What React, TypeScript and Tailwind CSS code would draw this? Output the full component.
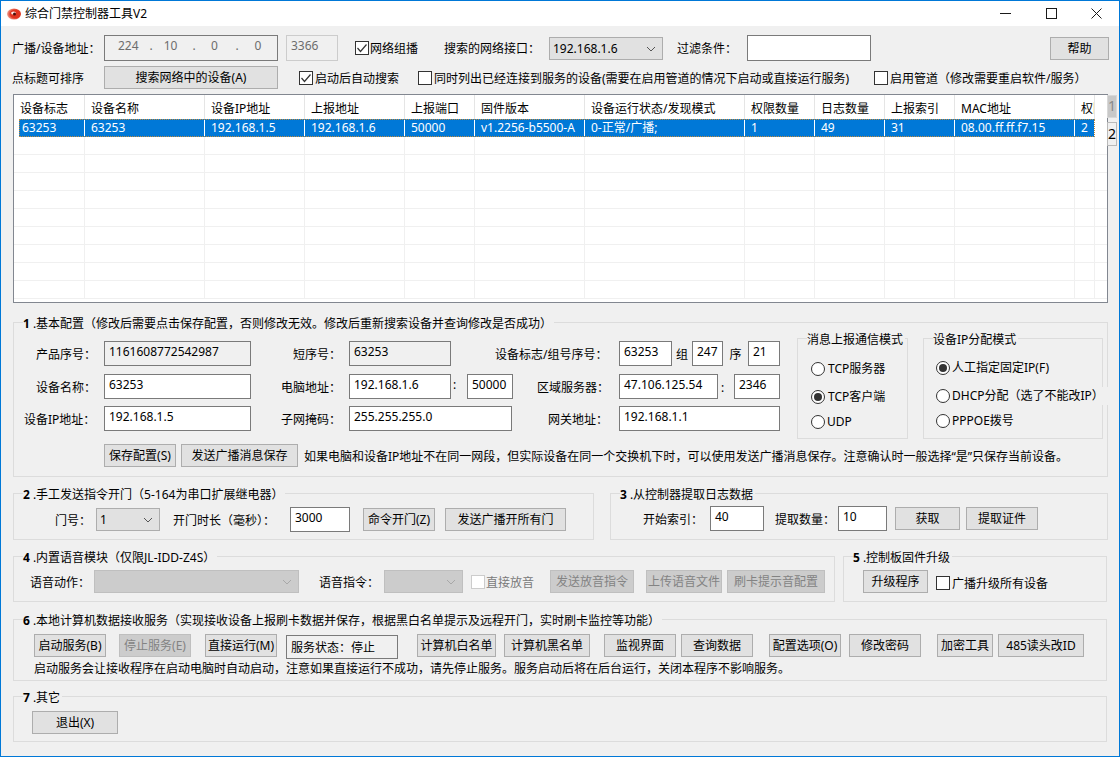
import React from "react";

type P = { className?: string; children?: React.ReactNode };

// full-width punctuation used by the dialog's labels
const CO = "\uFF1A";
const LP = "\uFF08";
const RP = "\uFF09";
const CM = "\uFF0C";

const rowCols = "grid grid-cols-[66px_120px_100px_100px_70px_110px_160px_70px_70px_70px_120px_20px] w-[1076px]";

const headers = ["设备标志", "设备名称", "设备IP地址", "上报地址", "上报端口", "固件版本", "设备运行状态/发现模式", "权限数量", "日志数量", "上报索引", "MAC地址", "权限"];
const device = ["63253", "63253", "192.168.1.5", "192.168.1.6", "50000", "v1.2256-b5500-A", "0-正常/广播;", "1", "49", "31", "08.00.ff.ff.f7.15", "2"];

function Btn({ className = "", children, disabled }: P & { disabled?: boolean }) {
  return (
    <div className={`h-[23px] shrink-0 flex items-center justify-center pt-[1px] whitespace-nowrap border ${disabled ? "bg-[#cccccc] border-[#bfbfbf] text-[#838383]" : "bg-[#e1e1e1] border-[#adadad]"} ${className}`}>
      {children}
    </div>
  );
}

function Label({ className = "", children }: P) {
  return <div className={`shrink-0 whitespace-nowrap pt-[2px] ${className}`}>{children}</div>;
}

function Input({ className = "", children }: P) {
  return <div className={`h-[25px] shrink-0 border border-[#7a7a7a] bg-white pl-[4px] leading-[20px] whitespace-nowrap ${className}`}>{children}</div>;
}

function Chevron({ color = "#555555" }: { color?: string }) {
  return (
    <svg width="10" height="6" viewBox="0 0 10 6" className="absolute right-[6px] top-[8px]">
      <path d="M1 1 L5 5 L9 1" fill="none" stroke={color} strokeWidth="1" />
    </svg>
  );
}

function Select({ className = "", children, disabled }: P & { disabled?: boolean }) {
  return (
    <div className={`relative h-[23px] shrink-0 border pl-[3px] leading-[21px] ${disabled ? "bg-[#cccccc] border-[#bfbfbf]" : "bg-[#e1e1e1] border-[#adadad]"} ${className}`}>
      {children}
      <Chevron color={disabled ? "#a8a8a8" : "#555555"} />
    </div>
  );
}

function Check({ className = "", checked, disabled }: { className?: string; checked?: boolean; disabled?: boolean }) {
  return (
    <div className={`w-[14px] h-[14px] shrink-0 border bg-white flex items-center justify-center ${disabled ? "border-[#cccccc]" : "border-[#333333]"} ${className}`}>
      {checked && (
        <svg width="12" height="12" viewBox="0 0 12 12">
          <path d="M1.5 6 L4.5 9.5 L10.5 2.5" fill="none" stroke="#333333" strokeWidth="1.2" />
        </svg>
      )}
    </div>
  );
}

function Radio({ checked }: { checked?: boolean }) {
  return (
    <div className="w-[14px] h-[14px] shrink-0 rounded-full border border-[#333333] bg-white flex items-center justify-center">
      {checked && <div className="w-[8px] h-[8px] rounded-full bg-[#333333]" />}
    </div>
  );
}

function Group({ className = "", num, title, children }: P & { num?: string; title: string }) {
  return (
    <div className={`relative shrink-0 border border-[#dcdcdc] ${className}`}>
      <div className="absolute left-[9px] top-[-8px] bg-[#f0f0f0] pr-[2px] h-[17px] leading-[17px] whitespace-nowrap">
        {num && <span className="font-bold mr-[3px]">{num}</span>}
        {num && <span>.</span>}
        {title}
      </div>
      {children}
    </div>
  );
}

export default function App() {
  return (
    <div className="w-[1120px] h-[757px] overflow-hidden border border-[#0078d7] bg-[#f0f0f0] text-[12px] text-black [font-family:'Noto_Sans','Noto_Sans_CJK_SC',sans-serif]">
      {/* title bar */}
      <div className="h-[25px] bg-white flex items-center relative">
        <svg width="14" height="12" viewBox="0 0 14 12" className="ml-[6px] shrink-0">
          <defs>
            <radialGradient id="appIcon" cx="0.6" cy="0.5" r="0.6">
              <stop offset="0.6" stopColor="#e0341f" />
              <stop offset="1" stopColor="#efa898" />
            </radialGradient>
          </defs>
          <ellipse cx="7" cy="6" rx="7" ry="5.5" fill="url(#appIcon)" />
          <ellipse cx="6.5" cy="5" rx="2.4" ry="1.6" fill="#fbe7e2" />
          <circle cx="7.5" cy="6" r="1.5" fill="#4a0d08" />
        </svg>
        <span className="ml-[4px] whitespace-nowrap">综合门禁控制器工具V2</span>
        <svg width="11" height="1" viewBox="0 0 11 1" className="ml-auto shrink-0">
          <rect width="11" height="1" fill="#1a1a1a" />
        </svg>
        <svg width="11" height="11" viewBox="0 0 11 11" className="ml-[35px] shrink-0">
          <rect x="0.5" y="0.5" width="10" height="10" fill="none" stroke="#1a1a1a" />
        </svg>
        <svg width="11" height="11" viewBox="0 0 11 11" className="ml-[34px] mr-[17px] shrink-0">
          <path d="M0.5 0.5 L10.5 10.5 M10.5 0.5 L0.5 10.5" stroke="#1a1a1a" fill="none" />
        </svg>
      </div>

      {/* address row */}
      <div className="mt-[9px] h-[26px] pl-[11px] flex items-center">
        <Label className="w-[92px]">广播/设备地址{CO}</Label>
        <div className="w-[174px] h-[26px] shrink-0 border border-[#7a7a7a] bg-[#f0f0f0] text-[#6d6d6d] flex items-start pl-[13px] pt-[1px] leading-[18px]">
          <span className="w-[23px]">224</span>
          <span className="w-[20px] text-center">.</span>
          <span className="w-[19px] text-center">10</span>
          <span className="w-[28px] text-center">.</span>
          <span className="w-[13px] text-center">0</span>
          <span className="w-[32px] text-center">.</span>
          <span className="w-[10px] text-center">0</span>
        </div>
        <div className="ml-[8px] w-[52px] h-[26px] shrink-0 border border-[#cccccc] text-[#6d6d6d] pl-[4px] pt-[1px] leading-[18px]">3366</div>
        <Check className="ml-[17px]" checked />
        <Label className="ml-[1px] w-[48px]">网络组播</Label>
        <Label className="ml-[26px] w-[105px]">搜索的网络接口{CO}</Label>
        <Select className="w-[114px]">192.168.1.6</Select>
        <Label className="ml-[14px] w-[70px]">过滤条件{CO}</Label>
        <div className="w-[124px] h-[26px] shrink-0 border border-[#7a7a7a] bg-white" />
        <Btn className="ml-[179px] w-[59px]">帮助</Btn>
      </div>

      {/* search row */}
      <div className="mt-[5px] h-[23px] pl-[11px] flex items-center">
        <Label className="w-[92px]">点标题可排序</Label>
        <Btn className="w-[174px]">搜索网络中的设备(A)</Btn>
        <Check className="ml-[21px]" checked />
        <Label className="ml-[2px] w-[103px]">启动后自动搜索</Label>
        <Check />
        <Label className="ml-[2px] w-[440px]">同时列出已经连接到服务的设备(需要在启用管道的情况下启动或直接运行服务)</Label>
        <Check />
        <Label className="ml-[2px]">启用管道{LP}修改需要重启软件/服务{RP}</Label>
      </div>

      {/* device list */}
      <div className="mt-[5px] pl-[12px] flex items-start">
        <div className="w-[1095px] h-[209px] shrink-0 border border-[#828790] bg-white overflow-hidden">
          <div className={`${rowCols} ml-[5px] h-[24px]`}>
            {headers.map((h, i) => (
              <div key={i} className={`border-r border-[#e5e5e5] overflow-hidden whitespace-nowrap leading-[27px] ${i === 0 ? "pl-[1px]" : "pl-[6px]"}`}>{h}</div>
            ))}
          </div>
          <div className="ml-[5px] w-[1076px] h-[18px] bg-[#0078d7] outline-1 outline-dotted outline-[#c08a3e] -outline-offset-1">
            <div className={rowCols}>
              {device.map((d, i) => (
                <div key={i} className={`h-[18px] border-r border-white text-white overflow-hidden whitespace-nowrap leading-[17px] ${i === 0 ? "pl-[3px]" : "pl-[6px]"}`}>{d}</div>
              ))}
            </div>
          </div>
          {[0, 1, 2, 3, 4, 5, 6, 7, 8].map((r) => (
            <div key={r} className="h-[18px] border-b border-[#f0f0f0]">
              <div className={`${rowCols} ml-[5px]`}>
                {headers.map((_, i) => (
                  <div key={i} className="h-[17px] border-r border-[#f0f0f0]" />
                ))}
              </div>
            </div>
          ))}
        </div>
        <div className="w-[10px] -ml-[1px] shrink-0 pt-[1px] text-[14px]">
          <div className="h-[23px] bg-[#c8c8c8] border border-[#d8d8d8] text-[#8a8a8a] leading-[20px] text-center overflow-hidden">1</div>
          <div className="mt-[4px] h-[24px] bg-[#f0f0f0] border border-[#b9b9b9] leading-[22px] text-center overflow-hidden">2</div>
        </div>
      </div>

      {/* 1 basic config */}
      <div className="mt-[19px] pl-[12px]">
        <Group className="w-[1095px] h-[155px]" num="1" title={`基本配置${LP}修改后需要点击保存配置${CM}否则修改无效。修改后重新搜索设备并查询修改是否成功${RP}`}>
          <div className="flex h-[116px]">
            <div className="w-[766px] shrink-0 pt-[18px]">
              <div className="h-[25px] flex items-center">
                <Label className="ml-[22px] w-[68px]">产品序号{CO}</Label>
                <Input className="w-[147px] bg-[#f0f0f0]!">1161608772542987</Input>
                <Label className="ml-[42px] w-[56px]">短序号{CO}</Label>
                <Input className="w-[102px] bg-[#f0f0f0]!">63253</Input>
                <Label className="ml-[44px] w-[124px]">设备标志/组号序号{CO}</Label>
                <Input className="w-[53px]">63253</Input>
                <Label className="w-[20px] text-center">组</Label>
                <Input className="w-[31px]">247</Input>
                <Label className="w-[25px] text-center">序</Label>
                <Input className="w-[32px]">21</Input>
              </div>
              <div className="mt-[8px] h-[25px] flex items-center">
                <Label className="ml-[22px] w-[68px]">设备名称{CO}</Label>
                <Input className="w-[147px]">63253</Input>
                <Label className="ml-[30px] w-[68px]">电脑地址{CO}</Label>
                <Input className="w-[102px]">192.168.1.6</Input>
                <Label className="w-[16px] pl-[2px] mb-[6px]">:</Label>
                <Input className="w-[46px]">50000</Input>
                <Label className="ml-[24px] w-[82px]">区域服务器{CO}</Label>
                <Input className="w-[99px]">47.106.125.54</Input>
                <Label className="w-[16px] pl-[3px]">:</Label>
                <Input className="w-[46px]">2346</Input>
              </div>
              <div className="mt-[7px] h-[25px] flex items-center">
                <Label className="ml-[10px] w-[80px]">设备IP地址{CO}</Label>
                <Input className="w-[147px]">192.168.1.5</Input>
                <Label className="ml-[30px] w-[68px]">子网掩码{CO}</Label>
                <Input className="w-[163px]">255.255.255.0</Input>
                <Label className="ml-[36px] w-[71px]">网关地址{CO}</Label>
                <Input className="w-[161px]">192.168.1.1</Input>
              </div>
            </div>
            <Group className="ml-[17px] mt-[15px] w-[111px] h-[101px]" title="消息上报通信模式">
              <div className="pl-[13px] pt-[22px]">
                <div className="h-[16px] flex items-center gap-[3px] whitespace-nowrap"><Radio />TCP服务器</div>
                <div className="mt-[12px] h-[16px] flex items-center gap-[3px] whitespace-nowrap"><Radio checked />TCP客户端</div>
                <div className="mt-[9px] h-[16px] flex items-center gap-[2px] whitespace-nowrap"><Radio />UDP</div>
              </div>
            </Group>
            <Group className="ml-[15px] mt-[15px] w-[180px] h-[101px]" title="设备IP分配模式">
              <div className="pt-[21px]">
                <div className="ml-[12px] h-[16px] flex items-center gap-[2px] whitespace-nowrap"><Radio checked />人工指定固定IP(F)</div>
                <div className="mt-[11px] ml-[12px] w-[172px] h-[18px] bg-[#f0f0f0] relative flex items-center gap-[2px] whitespace-nowrap"><Radio />DHCP分配{LP}选了不能改IP{RP}</div>
                <div className="mt-[8px] ml-[12px] h-[16px] flex items-center gap-[2px] whitespace-nowrap"><Radio />PPPOE拨号</div>
              </div>
            </Group>
          </div>
          <div className="mt-[5px] h-[23px] flex items-center">
            <Btn className="ml-[90px] w-[72px]">保存配置(S)</Btn>
            <Btn className="ml-[5px] w-[117px]">发送广播消息保存</Btn>
            <Label className="ml-[6px]">如果电脑和设备IP地址不在同一网段{CM}但实际设备在同一个交换机下时{CM}可以使用发送广播消息保存。注意确认时一般选择“是”只保存当前设备。</Label>
          </div>
        </Group>
      </div>

      {/* 2, 3 */}
      <div className="mt-[16px] pl-[12px] flex">
        <Group className="w-[581px] h-[47px]" num="2" title={`手工发送指令开门${LP}5-164为串口扩展继电器${RP}`}>
          <div className="mt-[13px] h-[25px] flex items-center">
            <Label className="ml-[41px] w-[41px]">门号{CO}</Label>
            <Select className="w-[64px]">1</Select>
            <Label className="ml-[13px] w-[117px]">开门时长{LP}毫秒{RP}{CO}</Label>
            <Input className="w-[60px]">3000</Input>
            <Btn className="ml-[13px] w-[72px]">命令开门(Z)</Btn>
            <Btn className="ml-[10px] w-[121px]">发送广播开所有门</Btn>
          </div>
        </Group>
        <Group className="ml-[16px] w-[498px] h-[47px]" num="3" title="从控制器提取日志数据">
          <div className="mt-[12px] h-[25px] flex items-center">
            <Label className="ml-[32px] w-[67px]">开始索引{CO}</Label>
            <Input className="w-[54px]">40</Input>
            <Label className="ml-[11px] w-[63px]">提取数量{CO}</Label>
            <Input className="w-[49px]">10</Input>
            <Btn className="ml-[8px] w-[65px]">获取</Btn>
            <Btn className="ml-[6px] w-[72px]">提取证件</Btn>
          </div>
        </Group>
      </div>

      {/* 4, 5 */}
      <div className="mt-[16px] pl-[12px] flex">
        <Group className="w-[822px] h-[46px]" num="4" title={`内置语音模块${LP}仅限JL-IDD-Z4S${RP}`}>
          <div className="mt-[13px] h-[23px] flex items-center">
            <Label className="ml-[16px] w-[64px]">语音动作{CO}</Label>
            <Select className="w-[205px]" disabled />
            <Label className="ml-[20px] w-[65px]">语音指令{CO}</Label>
            <Select className="w-[79px]" disabled />
            <Check className="ml-[8px]" disabled />
            <Label className="ml-[1px] w-[48px] text-[#7a7a7a]">直接放音</Label>
            <Btn className="ml-[16px] w-[84px]" disabled>发送放音指令</Btn>
            <Btn className="ml-[12px] w-[76px]" disabled>上传语音文件</Btn>
            <Btn className="ml-[5px] w-[98px]" disabled>刷卡提示音配置</Btn>
          </div>
        </Group>
        <Group className="ml-[8px] w-[264px] h-[46px]" num="5" title="控制板固件升级">
          <div className="mt-[13px] h-[23px] flex items-center">
            <Btn className="ml-[19px] w-[65px]">升级程序</Btn>
            <Check className="ml-[8px] mt-[2px]" />
            <Label className="ml-[2px] pt-[4px]">广播升级所有设备</Label>
          </div>
        </Group>
      </div>

      {/* 6 */}
      <div className="mt-[17px] pl-[12px]">
        <Group className="w-[1094px] h-[62px]" num="6" title={`本地计算机数据接收服务${LP}实现接收设备上报刷卡数据并保存${CM}根据黑白名单提示及远程开门${CM}实时刷卡监控等功能${RP}`}>
          <div className="mt-[14px] h-[25px] flex items-start">
            <Btn className="ml-[20px] w-[72px]">启动服务(B)</Btn>
            <Btn className="ml-[13px] w-[72px]" disabled>停止服务(E)</Btn>
            <Btn className="ml-[14px] w-[72px]">直接运行(M)</Btn>
            <div className="ml-[9px] mt-[1px] w-[112px] h-[24px] shrink-0 border border-[#7a7a7a] pl-[4px] leading-[24px]">服务状态{CO}停止</div>
            <Btn className="ml-[19px] w-[79px]">计算机白名单</Btn>
            <Btn className="ml-[8px] w-[86px]">计算机黑名单</Btn>
            <Btn className="ml-[14px] w-[72px]">监视界面</Btn>
            <Btn className="ml-[5px] w-[72px]">查询数据</Btn>
            <Btn className="ml-[16px] w-[72px]">配置选项(O)</Btn>
            <Btn className="ml-[8px] w-[72px]">修改密码</Btn>
            <Btn className="ml-[16px] w-[56px]">加密工具</Btn>
            <Btn className="ml-[5px] w-[86px]">485读头改ID</Btn>
          </div>
          <div className="mt-[1px] ml-[20px] h-[17px] leading-[17px] whitespace-nowrap">启动服务会让接收程序在启动电脑时自动启动{CM}注意如果直接运行不成功{CM}请先停止服务。服务启动后将在后台运行{CM}关闭本程序不影响服务。</div>
        </Group>
      </div>

      {/* 7 */}
      <div className="mt-[15px] pl-[12px]">
        <Group className="w-[1094px] h-[46px]" num="7" title="其它">
          <Btn className="mt-[14px] ml-[18px] w-[86px]">退出(X)</Btn>
        </Group>
      </div>
    </div>
  );
}
